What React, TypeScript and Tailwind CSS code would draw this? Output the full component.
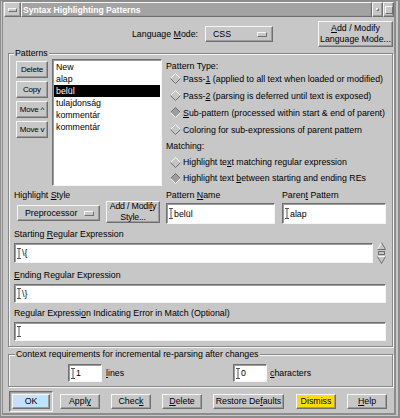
import React from "react"

const raised =
  "border border-t-[#f6f6f6] border-l-[#f6f6f6] border-r-[#6f6f6f] border-b-[#6f6f6f] shadow-[inset_-1px_-1px_0_#9c9c9c]"
const sunken =
  "border border-t-[#6f6f6f] border-l-[#6f6f6f] border-r-[#f6f6f6] border-b-[#f6f6f6] shadow-[inset_1px_1px_0_#9c9c9c]"
const etched = "border border-[#878787] shadow-[inset_1px_1px_0_#f6f6f6,1px_1px_0_#f6f6f6]"

function Caret() {
  return (
    <svg width="4" height="11" viewBox="0 0 4 11" className="shrink-0">
      <path d="M0 0.5H4M2 0.5V10.5M0 10.5H4" stroke="#555" strokeWidth="1" fill="none" />
    </svg>
  )
}

function Field({ value, className }: { value?: React.ReactNode; className?: string }) {
  return (
    <div className={`${sunken} bg-white flex items-center pl-[2px] ${className ?? ""}`}>
      <Caret />
      <span className="ml-[1px] whitespace-nowrap">{value}</span>
    </div>
  )
}

function Btn({ children, className }: { children: React.ReactNode; className?: string }) {
  return (
    <div className={`${raised} flex flex-col items-center justify-center text-center whitespace-nowrap leading-[11px] ${className ?? ""}`}>
      {children}
    </div>
  )
}

function OptionMenu({ label, className }: { label: string; className?: string }) {
  return (
    <div className={`${raised} flex items-center justify-between pl-[7px] pr-[5px] ${className ?? ""}`}>
      <span>{label}</span>
      <span className="w-[10px] h-[5px] border border-t-[#f6f6f6] border-l-[#f6f6f6] border-r-[#6f6f6f] border-b-[#6f6f6f]" />
    </div>
  )
}

function Diamond({ on }: { on?: boolean }) {
  const hi = on ? "#6f6f6f" : "#f6f6f6"
  const lo = on ? "#f6f6f6" : "#6f6f6f"
  return (
    <svg width="11" height="11" viewBox="0 0 11 11" className="shrink-0">
      <polygon points="5.5,0.5 10.5,5.5 5.5,10.5 0.5,5.5" fill={on ? "#9e9e9e" : "#c6c6c6"} />
      <polyline points="0.5,5.5 5.5,0.5 10.5,5.5" stroke={hi} fill="none" />
      <polyline points="0.5,5.5 5.5,10.5 10.5,5.5" stroke={lo} fill="none" />
    </svg>
  )
}

function Radio({ on, children, h }: { on?: boolean; children: React.ReactNode; h: string }) {
  return (
    <div className={`flex items-center pl-[4px] gap-[2px] whitespace-nowrap ${h}`}>
      <Diamond on={on} />
      <span>{children}</span>
    </div>
  )
}

function Arrows() {
  return (
    <svg width="9" height="22" viewBox="0 0 9 22" className="shrink-0">
      <polygon points="4.5,0.5 8.5,7.5 0.5,7.5" fill="#c6c6c6" />
      <polyline points="0.5,7.5 4.5,0.5" stroke="#f6f6f6" fill="none" />
      <polyline points="4.5,0.5 8.5,7.5 0.5,7.5" stroke="#6f6f6f" fill="none" />
      <rect x="1.5" y="9.5" width="6" height="3" fill="#c6c6c6" stroke="#6f6f6f" />
      <polygon points="0.5,14.5 8.5,14.5 4.5,21.5" fill="#c6c6c6" />
      <polyline points="0.5,14.5 8.5,14.5" stroke="#f6f6f6" fill="none" />
      <polyline points="0.5,14.5 4.5,21.5 8.5,14.5" stroke="#6f6f6f" fill="none" />
    </svg>
  )
}

function TitleBar() {
  return (
    <div className="h-[15px] flex pl-[1px]">
      <div className={`w-[17px] ${raised} flex items-center justify-center`}>
        <div className="w-[9px] h-[4px] border border-t-[#f6f6f6] border-l-[#f6f6f6] border-r-[#6f6f6f] border-b-[#6f6f6f]" />
      </div>
      <div className={`flex-1 bg-[#a3a3a3] ${raised} flex items-center pl-[1px] font-bold text-white text-[8.6px]`}>
        Syntax Highlighting Patterns
      </div>
      <div className={`w-[11px] ${raised} flex items-center justify-center`}>
        <div className="w-[3px] h-[3px] border border-t-[#f6f6f6] border-l-[#f6f6f6] border-r-[#6f6f6f] border-b-[#6f6f6f]" />
      </div>
      <div className={`w-[11px] ${raised} flex items-center justify-center`}>
        <div className="w-[8px] h-[8px] border border-t-[#f6f6f6] border-l-[#f6f6f6] border-r-[#6f6f6f] border-b-[#6f6f6f]" />
      </div>
    </div>
  )
}

const items = ["New", "alap", "belül", "tulajdonság", "kommentár", "kommentár"]

export default function App() {
  return (
    <div className="w-[400px] h-[418px] overflow-hidden bg-[#c7c7c7] border-double border-t-2 border-l-[3px] border-r-[6px] border-b-[5px] border-[#8c8c8c] font-['Liberation_Sans',Arial,sans-serif] text-[8.8px] leading-[10px] text-black flex flex-col">
      <TitleBar />

      <div className="flex-1 flex flex-col pl-[5px] pr-[1px]">
        {/* Language mode row */}
        <div className="mt-[4px] h-[26px] flex items-center">
          <div className="w-[190px] text-right">
            Language <u>M</u>ode:
          </div>
          <OptionMenu label="CSS" className="ml-[7px] w-[68px] h-[16px]" />
          <Btn className="ml-auto w-[75px] h-[26px]">
            <span>
              <u>A</u>dd / Modify
            </span>
            <span>Language Mode...</span>
          </Btn>
        </div>

        {/* Patterns frame */}
        <fieldset className={`mt-[1px] ${etched} pl-[5px] pr-[6px] pb-[5px]`}>
          <legend className="px-[1px] leading-[11px] bg-[#c7c7c7]">Patterns</legend>

          <div className="flex h-[127px]">
            <div className="ml-[2px] w-[32px] flex flex-col gap-[3px] pt-[2px] text-[8px] tracking-[-0.2px]">
              <Btn className="h-[17px]">Delete</Btn>
              <Btn className="h-[17px]">Copy</Btn>
              <Btn className="h-[17px]">Move ^</Btn>
              <Btn className="h-[17px]">Move v</Btn>
            </div>

            <div className={`ml-[4px] w-[110px] h-[127px] ${sunken} bg-white pt-[1px] px-[1px] leading-[12px]`}>
              {items.map((it, i) => (
                <div key={i} className={`pl-[2px] ${it === "belül" ? "bg-black text-white" : ""}`}>
                  {it}
                </div>
              ))}
            </div>

            <div className="ml-[4px] flex-1 flex flex-col pt-[3px]">
              <div className="leading-[8px]">Pattern Type:</div>
              <Radio h="h-[17px]">
                Pass-<u>1</u> (applied to all text when loaded or modified)
              </Radio>
              <Radio h="h-[17px]">
                Pass-<u>2</u> (parsing is deferred until text is exposed)
              </Radio>
              <Radio h="h-[17px]" on>
                <u>S</u>ub-pattern (processed within start &amp; end of parent)
              </Radio>
              <Radio h="h-[17px]">
                Colorin<u>g</u> for sub-expressions of parent pattern
              </Radio>
              <div className="mt-[4px] leading-[8px]">Matching:</div>
              <div className="mt-[4px]" />
              <Radio h="h-[16px]">
                Highlight te<u>x</u>t matching regular expression
              </Radio>
              <Radio h="h-[16px]" on>
                Highlight text <u>b</u>etween starting and ending REs
              </Radio>
            </div>
          </div>

          {/* Style / names row */}
          <div className="flex pt-[4px]">
            <div className="w-[148px] flex flex-col">
              <div>
                Highlight <u>S</u>tyle
              </div>
              <div className="mt-[1px] h-[22px] flex items-center">
                <OptionMenu label="Preprocessor" className="ml-[3px] w-[83px] h-[16px] mt-[2px]" />
                <Btn className="ml-[6px] w-[54px] h-[22px] tracking-[-0.2px]">
                  <span>
                    Add / Modi<u>f</u>y
                  </span>
                  <span>Style...</span>
                </Btn>
              </div>
            </div>
            <div className="ml-[4px] w-[109px] flex flex-col">
              <div>
                Pattern <u>N</u>ame
              </div>
              <Field value="belül" className="mt-[3px] h-[21px]" />
            </div>
            <div className="ml-[7px] flex-1 flex flex-col">
              <div>
                Paren<u>t</u> Pattern
              </div>
              <Field value="alap" className="mt-[3px] h-[21px]" />
            </div>
          </div>

          <div className="mt-[5px]">
            Starting <u>R</u>egular Expression
          </div>
          <div className="mt-[3px] flex items-center">
            <Field value="\{" className="flex-1 h-[20px]" />
            <div className="ml-[4px]">
              <Arrows />
            </div>
          </div>

          <div className="mt-[6px]">
            <u>E</u>nding Regular Expression
          </div>
          <Field value="\}" className="mt-[4px] h-[19px]" />

          <div className="mt-[5px]">
            Regular Expressi<u>o</u>n Indicating Error in Match (Optional)
          </div>
          <Field className="mt-[4px] h-[19px]" />
        </fieldset>

        {/* Context frame */}
        <fieldset className={`mt-[2px] ${etched} pl-[6px] pt-[4px] pb-[4px]`}>
          <legend className="px-[1px] leading-[11px] bg-[#c7c7c7]">
            Context requirements for incremental re-parsing after changes
          </legend>
          <div className="flex items-center h-[18px]">
            <div className="ml-[53px] w-[165px] flex items-center">
              <Field value="1" className="w-[34px] h-[18px]" />
              <span className="ml-[4px]">
                <u>l</u>ines
              </span>
            </div>
            <Field value="0" className="w-[34px] h-[18px]" />
            <span className="ml-[3px]">
              <u>c</u>haracters
            </span>
          </div>
        </fieldset>

        {/* Bottom buttons */}
        <div className="mt-[4px] h-[21px] flex items-center">
          <div className={`ml-[1px] w-[44px] h-[21px] ${sunken} p-[2px]`}>
            <Btn className="w-full h-full bg-[#c2e2fb]">OK</Btn>
          </div>
          <Btn className="ml-[7px] w-[40px] h-[15px]">
            <span>
              Appl<u>y</u>
            </span>
          </Btn>
          <Btn className="ml-[11px] w-[40px] h-[15px]">
            <span>
              Chec<u>k</u>
            </span>
          </Btn>
          <Btn className="ml-[11px] w-[40px] h-[15px]">
            <span>
              <u>D</u>elete
            </span>
          </Btn>
          <Btn className="ml-[11px] w-[71px] h-[15px]">
            <span>
              Restore De<u>f</u>aults
            </span>
          </Btn>
          <Btn className="ml-[12px] w-[40px] h-[15px] bg-[#ffdc00]">Dismiss</Btn>
          <Btn className="ml-[11px] w-[40px] h-[15px]">
            <span>
              <u>H</u>elp
            </span>
          </Btn>
        </div>
      </div>
    </div>
  )
}
